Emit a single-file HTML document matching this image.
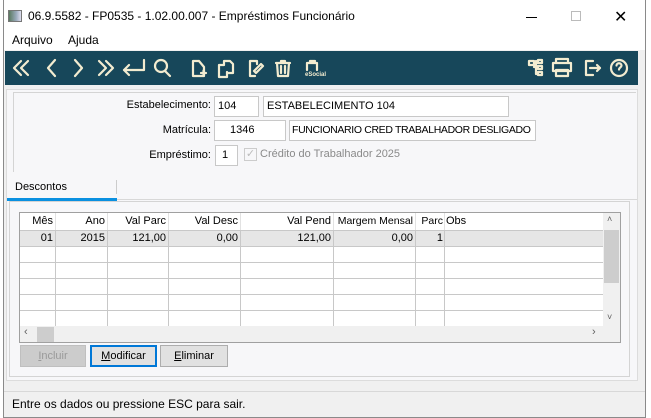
<!DOCTYPE html>
<html><head><meta charset="utf-8"><style>
*{margin:0;padding:0;box-sizing:border-box}
body{width:651px;height:418px;background:#fff;font-family:"Liberation Sans",sans-serif;font-size:12px;color:#000;position:relative;overflow:hidden}
.a{position:absolute}
.win{left:3px;top:0;width:643px;height:418px;border:1px solid #8a8a8a;border-top:none;background:#f0f0f0}
.inp{position:absolute;background:#fff;border:1px solid #c8c8c8;height:21px;line-height:19px;padding-left:3px;font-size:11px;white-space:nowrap;overflow:hidden}
.lbl{position:absolute;text-align:right;font-size:11px;white-space:nowrap}
.t{position:absolute;font-size:11px;white-space:nowrap}
.btn{position:absolute;top:345px;height:22px;border:1px solid #adadad;background:#e1e1e1;text-align:center;line-height:20px;font-size:11px}
svg{position:absolute}
</style></head><body>
<div class="a win"></div>
<div class="a" style="left:4px;top:0;width:641px;height:32px;background:#fff"></div>
<div class="a" style="left:8px;top:10px;width:14px;height:12px;background:linear-gradient(90deg,#5a7a60,#9ab 60%,#dde);border:1px solid #777"></div>
<div class="a" style="left:28px;top:9px;font-size:12px">06.9.5582 - FP0535 - 1.02.00.007 - Empréstimos Funcionário</div>
<div class="a" style="left:526px;top:17px;width:11px;height:1px;background:#000"></div>
<div class="a" style="left:571px;top:11px;width:10px;height:10px;border:1px solid #bbb"></div>
<div class="a" style="left:614px;top:7px;font-size:16px;font-weight:300">✕</div>
<div class="a" style="left:4px;top:32px;width:641px;height:18px;background:#fff"></div>
<div class="a" style="left:12px;top:33px;font-size:12px">Arquivo</div>
<div class="a" style="left:68px;top:33px;font-size:12px">Ajuda</div>
<div class="a" style="left:5px;top:51px;width:633px;height:34px;background:#17475a"></div>
<svg width="651" height="90" style="left:0;top:0" fill="none" stroke="#f3ecd0" stroke-width="2.2" stroke-linecap="round" stroke-linejoin="round">
<path d="M21 61l-7 7 7 7M28 61l-7 7 7 7"/>
<path d="M55 60l-7 8 7 8"/>
<path d="M75 60l7 8-7 8"/>
<path d="M99 61l7 7-7 7M106 61l7 7-7 7"/>
<path d="M144 60v10h-20M129 65l-5 5 5 5"/>
<circle cx="161" cy="66" r="6"/><path d="M165 71l5 5"/>
<path d="M199 61h-6v15h11v-9zM199 61l5 6M201 73h5M203.5 70.5v5"/>
<path d="M224 65h-5v12h8v-5M224 65v-4h6l3 3v9h-6"/>
<path d="M257 64v-3h-7v15h5M254 71l7-7 2 2-7 7z"/>
<path d="M276 63h14M281 63v-2h4v2M277 63l1 13h10l1-13M281 66v7M285 66v7"/>
<path d="M307 70v-7h10v7M310 63v-2h5"/>
<path d="M529 61h5v4h-5zM538 60h4v3h-4zM538 66h4v3h-4zM538 72h4v3h-4zM534 63h4M536 61v13h2M534 67h4"/>
<path d="M556 63v-4h12v4M553 63h18v8h-18zM556 70h12v6h-12z"/>
<path d="M593 61h-7v14h7M590 68h10M597 65l3 3-3 3"/>
<circle cx="619" cy="68" r="8"/><path d="M616.5 65.5c0-3 5-3 5 0 0 2-2.5 2-2.5 4"/>
</svg>
<div class="a" style="left:305px;top:72px;font-size:6px;color:#f3ecd0;font-weight:bold">eSocial</div>
<div class="a" style="left:6px;top:89px;width:632px;height:292px;background:#f7f7f9;border:1px solid #dcdcdc"></div>
<div class="a" style="left:13px;top:92px;width:623px;height:80px;border-top:1px solid #d4d4d4;border-left:1px solid #d4d4d4"></div>
<div class="lbl" style="left:60px;top:99px;width:151px">Estabelecimento:</div>
<div class="inp" style="left:214px;top:96px;width:45px">104</div>
<div class="inp" style="left:263px;top:96px;width:246px">ESTABELECIMENTO 104</div>
<div class="lbl" style="left:60px;top:124px;width:151px">Matrícula:</div>
<div class="inp" style="left:214px;top:120px;width:72px;padding-left:15px">1346</div>
<div class="inp" style="left:289px;top:120px;width:247px;font-size:10.5px;padding-left:2px;letter-spacing:-0.35px">FUNCIONARIO CRED TRABALHADOR DESLIGADO</div>
<div class="lbl" style="left:60px;top:149px;width:151px">Empréstimo:</div>
<div class="inp" style="left:215px;top:145px;width:23px;padding-left:6px">1</div>
<div class="a" style="left:244px;top:148px;width:13px;height:13px;border:1px solid #ccc;color:#bbb;font-size:11px;line-height:11px;text-align:center">✓</div>
<div class="a" style="left:260px;top:148px;color:#8a8a8a;font-size:11px">Crédito do Trabalhador 2025</div>
<div class="a" style="left:15px;top:181px;font-size:11px">Descontos</div>
<div class="a" style="left:116px;top:180px;width:1px;height:14px;background:#ccc"></div>
<div class="a" style="left:7px;top:199px;width:630px;height:1px;background:#d8d8d8"></div>
<div class="a" style="left:7px;top:198px;width:110px;height:3px;background:#0a90e0"></div>
<div class="a" style="left:9px;top:201px;width:621px;height:176px;border:1px solid #d4d4d4"></div>
<div class="a" style="left:19px;top:212px;width:602px;height:131px;border:1px solid #a0a0a0;background:#f0f0f0"></div>
<div class="a" style="left:20px;top:213px;width:583px;height:113px;background:#fff"></div>
<div class="a" style="left:20px;top:230px;width:583px;height:16px;background:#e6e6e6"></div>
<svg width="651" height="418" style="left:0;top:0" stroke="#c8c8c8" stroke-width="1">
<path d="M20 246.5h583M20 262.5h583M20 278.5h583M20 294.5h583M20 310.5h583M20 230.5h583"/>
<path d="M55.5 213v113M107.5 213v113M168.5 213v113M240.5 213v113M333.5 213v113M415.5 213v113M444.5 213v113" stroke="#e2e2e2"/>
<path d="M55.5 230v96M107.5 230v96M168.5 230v96M240.5 230v96M333.5 230v96M415.5 230v96M444.5 230v96"/>
</svg>
<div class="t" style="left:20px;top:215px;width:33px;text-align:right">Mês</div>
<div class="t" style="left:56px;top:215px;width:49px;text-align:right">Ano</div>
<div class="t" style="left:108px;top:215px;width:58px;text-align:right">Val Parc</div>
<div class="t" style="left:169px;top:215px;width:69px;text-align:right">Val Desc</div>
<div class="t" style="left:241px;top:215px;width:90px;text-align:right">Val Pend</div>
<div class="t" style="left:334px;top:215px;width:79px;text-align:right;font-size:10.5px">Margem Mensal</div>
<div class="t" style="left:416px;top:215px;width:27px;text-align:right;font-size:10.5px">Parc</div>
<div class="t" style="left:446px;top:215px">Obs</div>
<div class="t" style="left:20px;top:232px;width:33px;text-align:right">01</div>
<div class="t" style="left:56px;top:232px;width:49px;text-align:right">2015</div>
<div class="t" style="left:108px;top:232px;width:58px;text-align:right">121,00</div>
<div class="t" style="left:169px;top:232px;width:69px;text-align:right">0,00</div>
<div class="t" style="left:241px;top:232px;width:90px;text-align:right">121,00</div>
<div class="t" style="left:334px;top:232px;width:79px;text-align:right">0,00</div>
<div class="t" style="left:416px;top:232px;width:27px;text-align:right">1</div>
<div class="a" style="left:604px;top:230px;width:15px;height:53px;background:#cdcdcd"></div>
<div class="a" style="left:607px;top:214px;font-size:9px;color:#606060">˄</div>
<div class="a" style="left:607px;top:312px;font-size:9px;color:#606060">˅</div>
<div class="a" style="left:37px;top:327px;width:17px;height:15px;background:#cdcdcd"></div>
<div class="a" style="left:24px;top:326px;font-size:11px;color:#606060">‹</div>
<div class="a" style="left:592px;top:326px;font-size:11px;color:#606060">›</div>
<div class="btn" style="left:20px;width:66px;color:#9a9a9a;background:#ccc;border-color:#bfbfbf"><u>I</u>ncluir</div>
<div class="btn" style="left:90px;width:67px;border:2px solid #0078d7;line-height:18px"><u>M</u>odificar</div>
<div class="btn" style="left:160px;width:68px"><u>E</u>liminar</div>
<div class="a" style="left:4px;top:391px;width:641px;height:1px;background:#d8d8d8"></div>
<div class="a" style="left:12px;top:397px;font-size:12px">Entre os dados ou pressione ESC para sair.</div>
</body></html>
